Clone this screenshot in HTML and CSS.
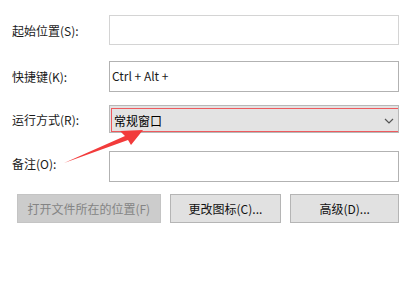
FILE: index.html
```html
<!DOCTYPE html>
<html lang="zh-CN">
<head>
<meta charset="UTF-8" />
<title>属性</title>
<link rel="stylesheet" href="styles.css">
</head>
<body>
  <div class="props">
    <div class="row row-start">
      <label class="lbl">起始位置(S):</label>
      <div class="field field-light"></div>
    </div>

    <div class="row row-key">
      <label class="lbl">快捷键(K):</label>
      <div class="field field-dark">Ctrl + Alt +</div>
    </div>

    <div class="row row-run">
      <label class="lbl">运行方式(R):</label>
      <div class="combo">
        <div class="combo-inner">
          <span>常规窗口</span>
          <svg class="chev" width="10" height="6" viewBox="0 0 10 6">
            <polyline points="1,1 5,5 9,1" fill="none" stroke="#555" stroke-width="1.2" />
          </svg>
        </div>
      </div>
    </div>

    <div class="row row-note">
      <label class="lbl">备注(O):</label>
      <div class="field field-dark"></div>
    </div>

    <div class="btns">
      <button class="btn btn-open" disabled>打开文件所在的位置(F)</button>
      <button class="btn btn-icon">更改图标(C)...</button>
      <button class="btn btn-adv">高级(D)...</button>
    </div>
  </div>

  <!-- 标注箭头 -->
  <svg class="arrow" width="400" height="300" viewBox="0 0 400 300">
    <polygon points="64,163 125,136 120,131 143,130 131,145 128,140" fill="#f23b3b" />
  </svg>
</body>
</html>
```

FILE: styles.css
```css
body {
  margin: 0;
  background-color: #fff;
  font-family: "Noto Sans CJK SC", "Liberation Sans", sans-serif;
  font-size: 12px;
  color: #1a1a1a;
  width: 400px;
  height: 300px;
  overflow: hidden;
  position: relative;
}

.props {
  padding: 15px 1px 0 12px;
}

.row {
  display: grid;
  grid-template-columns: 97px 1fr;
  align-items: center;
}

.lbl {
  white-space: nowrap;
}

.field {
  height: 30px;
  box-sizing: border-box;
  border: 1px solid #d4d4d4;
  background-color: #fff;
  padding: 4px 2px;
  line-height: 20px;
}

.field-dark {
  border-color: #b2b2b2;
  height: 31px;
}

.row-key {
  margin-top: 16px;
}

.row-run {
  margin-top: 13px;
}

.row-note {
  margin-top: 18px;
}

.row-note .lbl {
  margin-top: -6px;
}

.combo {
  height: 28px;
  box-sizing: border-box;
  border: 1px solid #b8b8b8;
  background-color: #e3e3e3;
  padding: 2px 0 0 1px;
}

.combo-inner {
  height: 24px;
  box-sizing: border-box;
  border: 1px solid #ee5a5e;
  border-right: none;
  display: flex;
  align-items: center;
  justify-content: space-between;
  padding: 0 4px 0 2px;
  color: #000;
}

.chev {
  margin-top: 1px;
}

.btns {
  display: flex;
  gap: 9px;
  margin-top: 12px;
  padding-left: 5px;
}

.btn {
  height: 29px;
  box-sizing: border-box;
  border: 1px solid #b5b5b5;
  background-color: #e1e1e1;
  font-family: inherit;
  font-size: 12px;
  color: #111;
  padding: 0;
}

.btn-open {
  width: 144px;
  background-color: #cccccc;
  border-color: #c4c4c4;
  color: #848484;
}

.btn-icon {
  width: 112px;
}

.btn-adv {
  width: 109px;
}

.arrow {
  position: absolute;
  left: 0;
  top: 0;
  pointer-events: none;
}
```
